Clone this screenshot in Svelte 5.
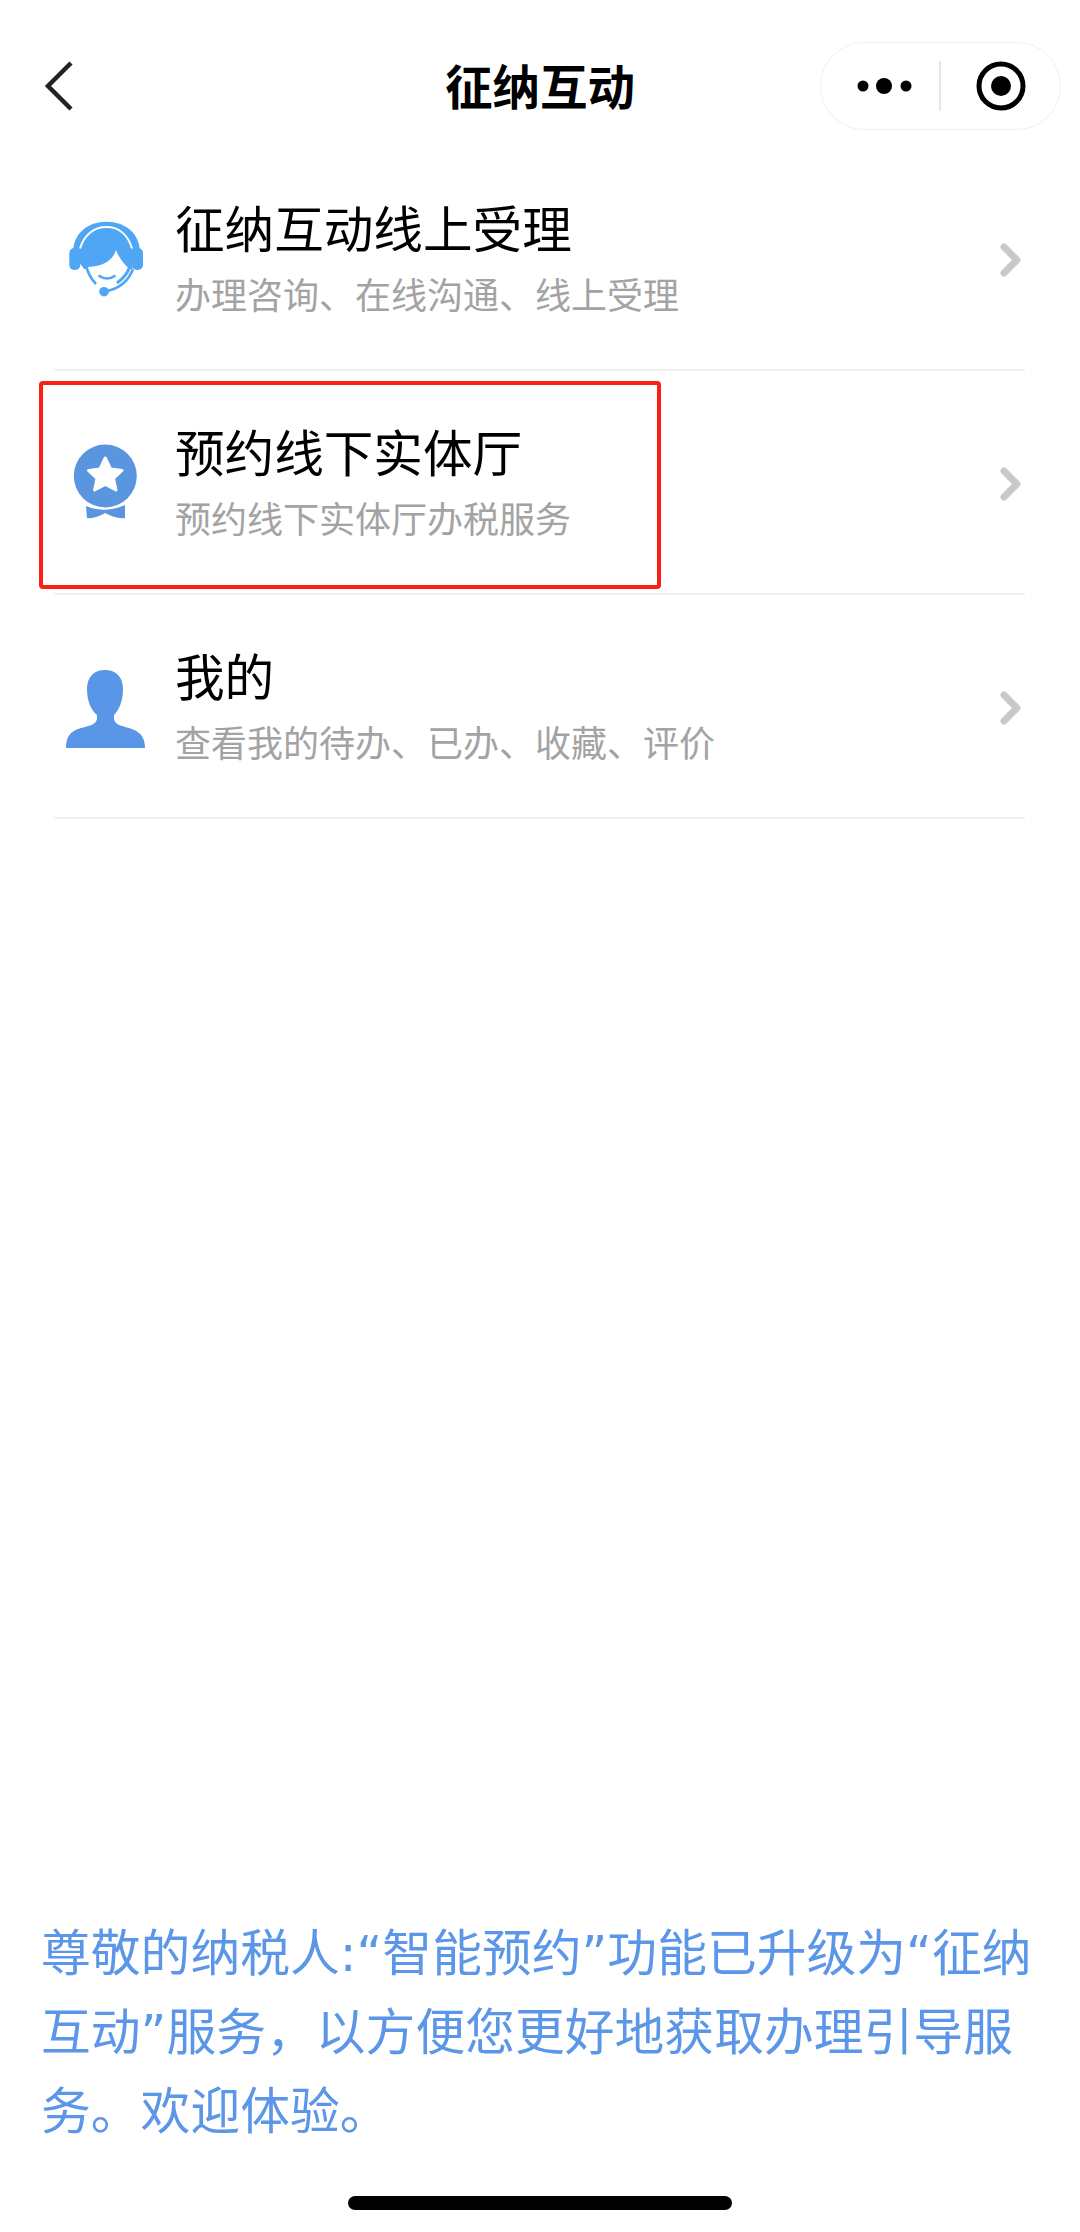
<script>
  const rows = [
    { title: '征纳互动线上受理', sub: '办理咨询、在线沟通、线上受理', icon: 'agent' },
    { title: '预约线下实体厅', sub: '预约线下实体厅办税服务', icon: 'medal', marked: true },
    { title: '我的', sub: '查看我的待办、已办、收藏、评价', icon: 'user' }
  ];
</script>

<div class="page">
  <header class="nav">
    <svg class="back" width="40" height="60" viewBox="0 0 40 60">
      <path d="M31 7 L8 30 L31 53" fill="none" stroke="#222" stroke-width="4.5" />
    </svg>
    <h1>征纳互动</h1>
    <div class="capsule">
      <svg width="56" height="20" viewBox="0 0 56 20">
        <circle cx="6" cy="10" r="5.5" fill="#000" />
        <circle cx="27" cy="10" r="8" fill="#000" />
        <circle cx="49" cy="10" r="5.5" fill="#000" />
      </svg>
      <span class="sep"></span>
      <svg width="52" height="52" viewBox="0 0 52 52">
        <circle cx="26" cy="26" r="22" fill="none" stroke="#000" stroke-width="5" />
        <circle cx="26" cy="26" r="10" fill="#000" />
      </svg>
    </div>
  </header>

  <ul class="list">
    {#each rows as row}
      <li class="row">
        {#if row.marked}<div class="mark"></div>{/if}
        <svg class="icon" width="90" height="90" viewBox="0 0 90 90">
          {#if row.icon === 'agent'}
            <path d="M13 40 C13 20 28 8.7 46.5 8.7 C65 8.7 80 20 80 40 L72 56 L24 56 Z" fill="#4ea6f5" />
            <rect x="9.3" y="35" width="11" height="22" rx="5" fill="#4ea6f5" />
            <rect x="72" y="35" width="11" height="22" rx="5" fill="#4ea6f5" />
            <path d="M20 35.5 C24 22 34 14 46.5 14 C59 14 68 22 72 35.5" fill="none" stroke="#fff" stroke-width="2" />
            <path d="M27.5 54 C38 54 52 50 56 37 C59 45 64 51 68.5 55 L68 60 L55 74 L37 74 L27 58 Z" fill="#fff" />
            <path d="M26 51 Q27.5 62 36 71" fill="none" stroke="#4ea6f5" stroke-width="2.6" />
            <path d="M38.5 62.5 Q47 68.5 55.5 62.5" fill="none" stroke="#4ea6f5" stroke-width="2.6" />
            <path d="M73 56 Q66 75 44 78.7" fill="none" stroke="#4ea6f5" stroke-width="2.6" />
            <path d="M70 53 Q67 63 57 70" fill="none" stroke="#4ea6f5" stroke-width="3" />
            <circle cx="44" cy="78.7" r="4.8" fill="#4ea6f5" />
          {:else if row.icon === 'medal'}
            <circle cx="45.3" cy="39" r="31.5" fill="#5a96df" />
            <path d="M45.3 21 L50.5 32 L62 33.5 L53.5 41.5 L56 53 L45.3 47.5 L34.6 53 L37 41.5 L28.5 33.5 L40 32 Z" fill="#fff" stroke="#fff" stroke-width="3" stroke-linejoin="round" />
            <path d="M26 69 Q45 77 65 68 L65 81 Q55 82 45.3 76 Q35 82 27 81 Z" fill="#5a96df" />
          {:else}
            <path d="M6 87 C6 76 10 71 18 68 C26 65 36 65 37 58 L37 54 C31 49 27 40 27 28 C27 16 34 9 45 9 C56 9 63 16 63 28 C63 40 59 49 54 54 L54 58 C55 65 64 65 72 68 C80 71 85 76 85 87 Z" fill="#5a96e8" />
          {/if}
        </svg>
        <div class="text">
          <div class="title">{row.title}</div>
          <div class="sub">{row.sub}</div>
        </div>
        <svg class="chevron" width="24" height="40" viewBox="0 0 24 40">
          <path d="M4 7 L17 20 L4 33" fill="none" stroke="#c9c9c9" stroke-width="7" stroke-linecap="round" stroke-linejoin="round" />
        </svg>
      </li>
    {/each}
  </ul>

  <footer class="foot">
    <p>尊敬的纳税人:“智能预约”功能已升级为“征纳互动”服务，以方便您更好地获取办理引导服务。欢迎体验。</p>
    <div class="home"></div>
  </footer>
</div>

<style>
  :global(body) {
    margin: 0;
    background: #fff;
  }
  .page {
    height: 2232px;
    display: flex;
    flex-direction: column;
    font-family: "Noto Sans CJK SC", sans-serif;
    overflow: hidden;
  }
  .nav {
    position: relative;
    display: flex;
    align-items: center;
    justify-content: space-between;
    height: 88px;
    margin-top: 42px;
    padding: 0 19px 0 40px;
  }
  .nav h1 {
    position: absolute;
    left: 0;
    right: 0;
    top: 10px;
    margin: 0;
    text-align: center;
    font-size: 47.5px;
    line-height: 66px;
    font-weight: 700;
    color: #000;
  }
  .capsule {
    display: flex;
    align-items: center;
    box-sizing: border-box;
    width: 241px;
    height: 88px;
    padding: 0 33px 0 36px;
    border: 1.5px solid #f0f0f0;
    border-radius: 44px;
  }
  .sep {
    width: 1.5px;
    height: 50px;
    margin: 0 auto 0 26px;
    background: #e6e6e6;
  }
  .list {
    list-style: none;
    margin: 17px 55px 0 54px;
    padding: 0;
  }
  .row {
    position: relative;
    display: flex;
    align-items: center;
    box-sizing: border-box;
    height: 224px;
    border-bottom: 2px solid #f1f1f1;
  }
  .mark {
    position: absolute;
    left: -15px;
    top: 10px;
    width: 622px;
    height: 208px;
    box-sizing: border-box;
    border: 4px solid #fa2015;
    border-radius: 4px;
  }
  .icon {
    flex: none;
    margin-left: 6px;
  }
  .text {
    flex: 1;
    margin-left: 25px;
    padding-top: 3px;
  }
  .title {
    font-size: 49.6px;
    line-height: 67px;
    color: #000;
  }
  .sub {
    font-size: 36px;
    line-height: 67px;
    color: #a3a3a3;
  }
  .chevron {
    flex: none;
    margin: 3px 1px 0 0;
  }
  .foot {
    margin-top: auto;
  }
  .foot p {
    margin: 0;
    padding: 0 41px;
    font-family: "DejaVu Sans", "Noto Sans CJK SC", sans-serif;
    font-size: 49.8px;
    line-height: 79px;
    color: #5b96e8;
  }
  .home {
    width: 384px;
    height: 14px;
    margin: 44px auto 22px;
    border-radius: 7px;
    background: #000;
  }
</style>
